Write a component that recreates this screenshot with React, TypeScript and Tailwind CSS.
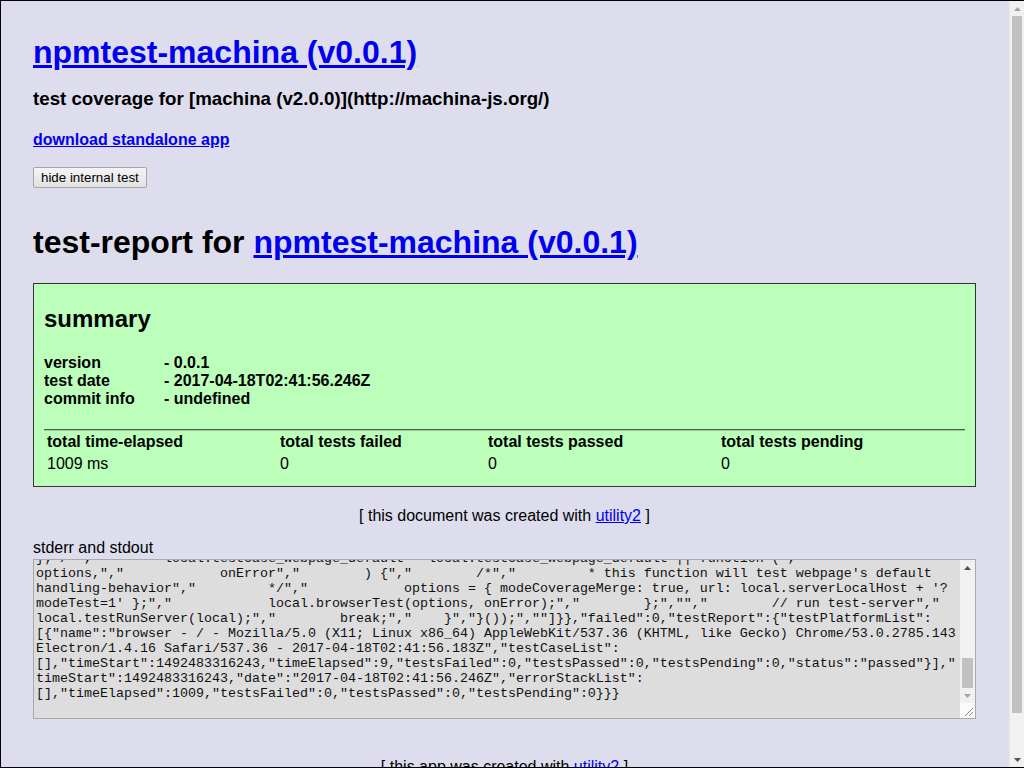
import { useEffect, useRef } from "react";

const hiddenLines = [
  "",
  "[1m[33m[PHANTOM][0m - testing http://127.0.0.1:8081/?modeTest=1",
  "",
  "[1m[33m[PHANTOM][0m - electron.app - http://127.0.0.1:8081/?modeTest=1",
  "",
  "{\"coverage\":{},\"testName\":\"test.npmtest-machina.js\",\"testStatus\":\"passed\",\"timeElapsed\":1009,",
  "\"fileElectronHtml\":\"/tmp/electron.1492483315237.html\",\"modeBrowserTest\":\"test\",\"modeCoverageMerge\":true,",
  "\"modeNext\":5,\"modeSilent\":true,\"timeoutDefault\":30000,\"url\":\"http://127.0.0.1:8081/?modeTest=1\",",
  "\"testCaseList\":[],\"timeStart\":1492483316243,\"errorStack\":\"\",\"fileCoverage\":\"npmtest-machina/lib.npmtest_machina.js\",",
  "\"taskList\":[\"init\",\"serverStart\",\"browserTest\"],\"timeEnd\":1492483317252,\"modeTest\":\"1\",\"onReadyAfter\":[],",
  "\"onErrorDefault\":\"function (error) {\",\"    // jslint-hack\",\"    local.nop(error);\",\"}\",\"testScript\":[\"/*jslint\",",
  "\"    bitwise: true,\",\"    browser: true,\",\"    maxerr: 8,\",\"    maxlen: 96,\",\"    node: true,\",\"    nomen: true,\",",
  "\"    regexp: true,\",\"    stupid: true\",\"*/\",\"(function () {\",\"    'use strict';\",\"    var local;\",\"\",",
  "\"\",\"\",\"    // run shared js-env code - pre-init\",\"    (function () {\",\"        // init local\",",
  "\"        local = {};\",\"        // init modeJs\",\"        local.modeJs = (function () {\",\"            try {\",",
  "\"                return typeof navigator.userAgent === 'string' &&\",\"                    typeof document.querySelector('body') === 'object' &&\",",
  "\"                    typeof XMLHttpRequest.prototype.open === 'function' &&\",\"                    'browser';\",",
  "\"            } catch (errorCaughtBrowser) {\",\"                return module.exports &&\",",
  "\"                    typeof process.versions.node === 'string' &&\",\"                    typeof require('http').createServer === 'function' &&\",",
  "\"                    'node';\",\"            }\",\"        }());\",\"        // init global\",",
  "\"        local.global = local.modeJs === 'browser'\",\"            ? window\",\"            : global;\",",
  "\"        // init utility2_rollup\",\"        local = local.global.utility2_rollup || (local.modeJs === 'browser'\",",
  "\"            ? local.global.utility2_npmtest_machina\",\"            : require('utility2'));\",\"        // init exports\",",
  "\"        local.global.local = local;\",\"    }());\",\"    switch (local.modeJs) {\",\"\",\"\",\"\",",
  "\"    // run browser js-env code - function\",\"    case 'browser':\",\"        local.testCase_browser_nullCase = function (\",",
  "\"            options,\",\"            onError\",\"        ) {\",\"        /*\",\"         * this function will test browsers's null-case\",",
  "\"         */\",\"            options = {};\",\"            onError(null, options);\",\"        };\",\"        break;\",\"\",\"\",\"\",",
  "\"    // run node js-env code - function\",\"    case 'node':\",\"        local.testCase_buildApidoc_default = function (\",",
  "\"            options,\",\"            onError\",\"        ) {\",\"        /*\",\"         * this function will test buildApidoc's default\",",
  "\"         */\",\"            local.buildApidoc({}, onError);\",\"        };\",\"\",\"        local.testCase_buildApp_default = function (\",",
  "\"            options,\",\"            onError\",\"        ) {\",\"            local.testCase_buildReadme_default(options, local.onErrorThrow);",
];

const visibleLines = [
  '}; /*","        local.testCase_webpage_default = local.testCase_webpage_default || function (","',
  'options,","            onError","        ) {","        /*","         * this function will test webpage\'s default',
  'handling-behavior","         */","            options = { modeCoverageMerge: true, url: local.serverLocalHost + \'?',
  'modeTest=1\' };","            local.browserTest(options, onError);","        };","","        // run test-server","',
  'local.testRunServer(local);","        break;","    }","}());",""]}},"failed":0,"testReport":{"testPlatformList":',
  '[{"name":"browser - / - Mozilla/5.0 (X11; Linux x86_64) AppleWebKit/537.36 (KHTML, like Gecko) Chrome/53.0.2785.143',
  'Electron/1.4.16 Safari/537.36 - 2017-04-18T02:41:56.183Z","testCaseList":',
  '[],"timeStart":1492483316243,"timeElapsed":9,"testsFailed":0,"testsPassed":0,"testsPending":0,"status":"passed"}],"',
  'timeStart":1492483316243,"date":"2017-04-18T02:41:56.246Z","errorStackList":',
  '[],"timeElapsed":1009,"testsFailed":0,"testsPassed":0,"testsPending":0}}}',
  "",
];

const outputText = [...hiddenLines, ...visibleLines].join("\n");

const summaryRows = [
  ["version", "- 0.0.1"],
  ["test date", "- 2017-04-18T02:41:56.246Z"],
  ["commit info", "- undefined"],
];

const totals = [
  ["total time-elapsed", "1009 ms"],
  ["total tests failed", "0"],
  ["total tests passed", "0"],
  ["total tests pending", "0"],
];

function Arrow({ up, active }: { up?: boolean; active?: boolean }) {
  return (
    <div className="h-[15px] flex items-center justify-center">
      <svg width="7" height="4" viewBox="0 0 7 4">
        <polygon
          points={up ? "0,4 3.5,0 7,4" : "0,0 7,0 3.5,4"}
          fill={active ? "#505050" : "#a3a3a3"}
        />
      </svg>
    </div>
  );
}

export default function App() {
  const outputRef = useRef<HTMLTextAreaElement>(null);

  useEffect(() => {
    const el = outputRef.current;
    if (el) el.scrollTop = el.scrollHeight;
  }, []);

  return (
    <div className="h-[768px] flex border-t border-l border-b border-black bg-[#dde] text-black font-['Liberation_Sans',Arial,sans-serif]">
      <div className="flex-1 overflow-hidden pt-[31px] pl-[32px] pr-[33px]">
        <h1 className="text-[32px] leading-[40px] font-bold">
          <a href="#" className="text-[#0000ee] underline">
            npmtest-machina (v0.0.1)
          </a>
        </h1>
        <h3 className="mt-[15px] text-[18.72px] leading-[24px] font-bold">
          test coverage for [machina (v2.0.0)](http://machina-js.org/)
        </h3>
        <h4 className="mt-[19px] text-[16px] leading-[20px] font-bold">
          <a href="#" className="text-[#0000ee] underline">
            download standalone app
          </a>
        </h4>
        <button className="mt-[17px] block h-[21px] px-[7px] rounded-[2px] border border-[#a6a6a6] bg-gradient-to-b from-[#f4f4f4] to-[#e2e2e2] text-[13.33px] leading-[19px] text-black">
          hide internal test
        </button>

        <h1 className="mt-[34px] text-[32px] leading-[40px] font-bold">
          test-report for{" "}
          <a href="#" className="text-[#0000ee] underline">
            npmtest-machina (v0.0.1)
          </a>
        </h1>

        <div className="mt-[21px] border border-[#333] bg-[#bbffbb] px-[10px] pt-[21px] pb-[12px]">
          <h2 className="text-[24px] leading-[28px] font-bold">summary</h2>
          <div className="mt-[21px]">
            {summaryRows.map(([label, value]) => (
              <div key={label} className="flex text-[16px] leading-[18px] font-bold">
                <span className="w-[120px]">{label}</span>
                <span>{value}</span>
              </div>
            ))}
          </div>
          <div className="mt-[21px] border-t border-[#555] border-b border-b-[#9c9]" />
          <div className="grid grid-cols-[233px_208px_233px_1fr] pl-[3px] pt-[1px] text-[16px] leading-[20px]">
            {totals.map(([label]) => (
              <div key={label} className="font-bold">
                {label}
              </div>
            ))}
            {totals.map(([label, value]) => (
              <div key={label} className="pt-[2px]">
                {value}
              </div>
            ))}
          </div>
        </div>

        <p className="mt-[19px] text-center text-[16px] leading-[20px]">
          [ this document was created with{" "}
          <a href="#" className="text-[#0000ee] underline">
            utility2
          </a>{" "}
          ]
        </p>

        <div className="mt-[14px] text-[16px] leading-[16px]">stderr and stdout</div>
        <div className="mt-[3px] flex h-[160px] border border-[#a9a9a9] bg-[#ddd]">
          <textarea
            ref={outputRef}
            readOnly
            defaultValue={outputText}
            className="flex-1 h-[158px] resize-none overflow-hidden outline-none bg-transparent p-[2px] text-[13.33px] leading-[15px] text-[#111] font-['Liberation_Mono',monospace]"
          />
          <div className="w-[15px] flex flex-col bg-[#f1f1f1]">
            <Arrow up active />
            <div className="flex-1 flex flex-col justify-end px-[2px]">
              <div className="h-[30px] bg-[#c1c1c1]" />
            </div>
            <Arrow />
            <div className="h-[15px] bg-[#fafafa] flex items-end justify-end">
              <svg width="15" height="15" viewBox="0 0 15 15">
                <line x1="13" y1="5" x2="5" y2="13" stroke="#8a8a8a" strokeWidth="1" />
                <line x1="13" y1="9" x2="9" y2="13" stroke="#8a8a8a" strokeWidth="1" />
              </svg>
            </div>
          </div>
        </div>

        <p className="mt-[38px] text-center text-[16px] leading-[20px]">
          [ this app was created with{" "}
          <a href="#" className="text-[#0000ee] underline">
            utility2
          </a>{" "}
          ]
        </p>
      </div>

      <div className="w-[15px] flex flex-col bg-[#f1f1f1] border-l border-l-[#e8e8e8]">
        <Arrow up />
        <div className="flex-1 px-[2px]">
          <div className="h-[697px] bg-[#c1c1c1]" />
        </div>
        <Arrow active />
      </div>
    </div>
  );
}
